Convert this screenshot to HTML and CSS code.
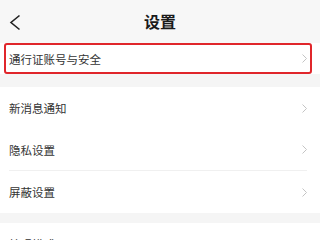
FILE: index.html
```html
<!DOCTYPE html>
<html lang="zh">
<head>
<meta charset="utf-8">
<link rel="stylesheet" href="styles.css">
</head>
<body>
<div class="header">
  <svg class="back" width="24" height="42" viewBox="0 0 24 42"><polyline points="19.5,14.5 11,21.5 19.5,28.5" fill="none" stroke="#222" stroke-width="1.6"/></svg>
  <div class="title">设置</div>
  <div class="spacer"></div>
</div>
<div class="section first">
  <div class="row hl">
    <span class="label">通行证账号与安全</span>
    <svg class="chev" width="5" height="9" viewBox="0 0 5 9"><polyline points="0.5,0.5 4.5,4.5 0.5,8.5" fill="none" stroke="#c4c4c4" stroke-width="1"/></svg>
  </div>
</div>
<div class="section">
  <div class="row tall">
    <span class="label">新消息通知</span>
    <svg class="chev" width="5" height="9" viewBox="0 0 5 9"><polyline points="0.5,0.5 4.5,4.5 0.5,8.5" fill="none" stroke="#c4c4c4" stroke-width="1"/></svg>
  </div>
  <div class="row tall divided">
    <span class="label">隐私设置</span>
    <svg class="chev" width="5" height="9" viewBox="0 0 5 9"><polyline points="0.5,0.5 4.5,4.5 0.5,8.5" fill="none" stroke="#c4c4c4" stroke-width="1"/></svg>
  </div>
  <div class="row tall">
    <span class="label">屏蔽设置</span>
    <svg class="chev" width="5" height="9" viewBox="0 0 5 9"><polyline points="0.5,0.5 4.5,4.5 0.5,8.5" fill="none" stroke="#c4c4c4" stroke-width="1"/></svg>
  </div>
</div>
<div class="section last">
  <div class="row tall">
    <span class="label">护眼模式</span>
    <span class="value">关闭</span>
    <svg class="chev" width="5" height="9" viewBox="0 0 5 9"><polyline points="0.5,0.5 4.5,4.5 0.5,8.5" fill="none" stroke="#c4c4c4" stroke-width="1"/></svg>
  </div>
</div>
</body>
</html>
```
FILE: styles.css
```css
html, body {
  margin: 0;
  padding: 0;
  background: #f5f5f5;
  font-family: "Noto Sans CJK SC", "Noto Sans", sans-serif;
  color: #333;
  width: 320px;
  height: 240px;
  overflow: hidden;
}
.header {
  height: 43px;
  background: #f7f7f7;
  display: grid;
  grid-template-columns: 40px 1fr 40px;
  align-items: center;
}
.back {
  display: block;
}
.title {
  text-align: center;
  font-size: 16px;
  font-weight: bold;
  color: #1a1a1a;
  line-height: 43px;
}
.section {
  background: #fff;
  margin-bottom: 10px;
}
.section.first {
  padding: 0 8px 0 4px;
  margin-bottom: 13px;
}
.row {
  display: flex;
  align-items: center;
  padding: 0 13px 0 9px;
  box-sizing: border-box;
}
.row.hl {
  height: 31px;
  border: 2px solid #e0262b;
  border-radius: 3px;
  padding: 0 3px 0 3px;
}
.row.tall {
  height: 42px;
}
.row.divided {
  border-bottom: 1px solid #f0f0f0;
  margin: 0 13px 0 9px;
  padding: 0;
}
.label {
  font-size: 11.5px;
  flex: 1;
  color: #333;
}
.value {
  font-size: 9px;
  color: #999;
  margin-right: 6px;
}
.chev {
  display: block;
}
```
